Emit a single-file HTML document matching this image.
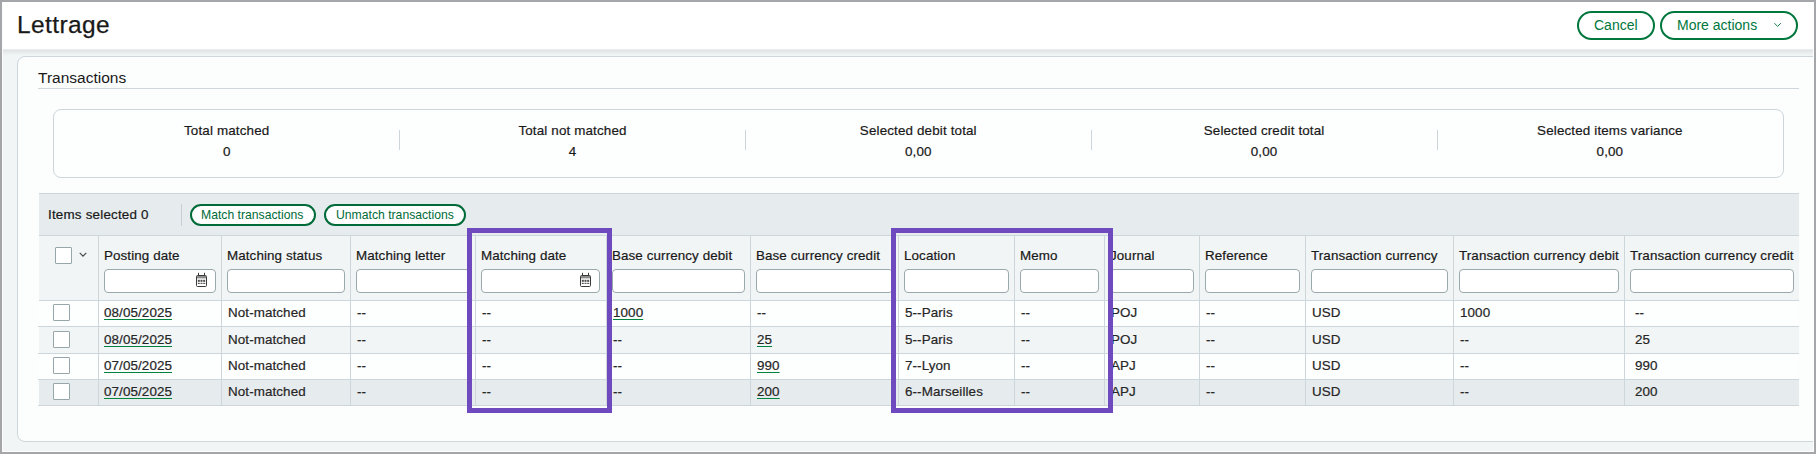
<!DOCTYPE html>
<html><head><meta charset="utf-8"><style>
html,body{margin:0;padding:0;}
body{width:1816px;height:454px;background:#a4a6a9;position:relative;overflow:hidden;font-family:"Liberation Sans", sans-serif;}
.b{position:absolute;}
.t{position:absolute;white-space:nowrap;}
.ls{letter-spacing:0.2px;-webkit-text-stroke:0.2px currentColor;}
</style></head><body>
<div style="position:absolute;left:0;top:0;width:1814px;height:452px;overflow:hidden">
<div class="b" style="left:2px;top:2px;width:1812px;height:450px;background:#f2f5f6;"></div>
<div class="b" style="left:2px;top:2px;width:1812px;height:47px;background:#ffffff;"></div>
<div class="b" style="left:2px;top:49px;width:1812px;height:1px;background:#eaeded;"></div>
<div class="b" style="left:2px;top:50px;width:1812px;height:1px;background:#e2e5e6;"></div>
<div class="b" style="left:2px;top:51px;width:1812px;height:1px;background:#e5e8e9;"></div>
<div class="b" style="left:2px;top:52px;width:1812px;height:1px;background:#e9eced;"></div>
<div class="b" style="left:2px;top:53px;width:1812px;height:1px;background:#edf0f1;"></div>
<div class="b" style="left:2px;top:54px;width:1812px;height:1px;background:#eff2f3;"></div>
<div class="b" style="left:2px;top:55px;width:1812px;height:1px;background:#f1f4f5;"></div>
<div class="t " style="left:17px;top:10.83px;font-size:24.5px;line-height:27.366px;color:#191919;font-weight:normal;letter-spacing:0.4px;-webkit-text-stroke:0.25px #191919;">Lettrage</div>
<div class="b" style="left:1577px;top:11px;width:78px;height:29px;border:2px solid #00773d;border-radius:15px;box-sizing:border-box;background:#fff;"></div>
<div class="t " style="left:1594px;top:18.33px;font-size:14px;line-height:15.638px;color:#00773d;font-weight:normal;">Cancel</div>
<div class="b" style="left:1660px;top:11px;width:138px;height:29px;border:2px solid #00773d;border-radius:15px;box-sizing:border-box;background:#fff;"></div>
<div class="t " style="left:1677px;top:18.33px;font-size:14px;line-height:15.638px;color:#00773d;font-weight:normal;">More actions</div>
<svg class="b" style="left:1774px;top:22px" width="8" height="6" viewBox="0 0 8 6"><path d="M0.4 1.2 L3.6 4.4 L6.8 1.2" fill="none" stroke="#00773d" stroke-width="0.95"/></svg>
<div class="b" style="left:17px;top:56px;width:1830px;height:386px;background:#fcfdfd;border:1px solid #ccd6db;border-radius:8px;box-sizing:border-box;"></div>
<div class="t " style="left:38px;top:68.97px;font-size:15.5px;line-height:17.314px;color:#191919;font-weight:normal;">Transactions</div>
<div class="b" style="left:38px;top:88px;width:1761px;height:1px;background:#ccd6db;"></div>
<div class="b" style="left:53px;top:109px;width:1731px;height:69px;background:#fdfefe;border:1px solid #ccd6db;border-radius:8px;box-sizing:border-box;"></div>
<div class="t" style="letter-spacing:0.15px;-webkit-text-stroke:0.2px currentColor;left:26.69999999999999px;width:400px;text-align:center;top:123.87px;font-size:13.4px;line-height:14.968px;color:#191919;">Total matched</div>
<div class="t" style="letter-spacing:0.15px;-webkit-text-stroke:0.2px currentColor;left:26.69999999999999px;width:400px;text-align:center;top:144.87px;font-size:13.4px;line-height:14.968px;color:#191919;">0</div>
<div class="t" style="letter-spacing:0.15px;-webkit-text-stroke:0.2px currentColor;left:372.5px;width:400px;text-align:center;top:123.87px;font-size:13.4px;line-height:14.968px;color:#191919;">Total not matched</div>
<div class="t" style="letter-spacing:0.15px;-webkit-text-stroke:0.2px currentColor;left:372.5px;width:400px;text-align:center;top:144.87px;font-size:13.4px;line-height:14.968px;color:#191919;">4</div>
<div class="b" style="left:399px;top:130px;width:1px;height:20px;background:#ccd6db;"></div>
<div class="t" style="letter-spacing:0.15px;-webkit-text-stroke:0.2px currentColor;left:718.3px;width:400px;text-align:center;top:123.87px;font-size:13.4px;line-height:14.968px;color:#191919;">Selected debit total</div>
<div class="t" style="letter-spacing:0.15px;-webkit-text-stroke:0.2px currentColor;left:718.3px;width:400px;text-align:center;top:144.87px;font-size:13.4px;line-height:14.968px;color:#191919;">0,00</div>
<div class="b" style="left:745px;top:130px;width:1px;height:20px;background:#ccd6db;"></div>
<div class="t" style="letter-spacing:0.15px;-webkit-text-stroke:0.2px currentColor;left:1064.1000000000001px;width:400px;text-align:center;top:123.87px;font-size:13.4px;line-height:14.968px;color:#191919;">Selected credit total</div>
<div class="t" style="letter-spacing:0.15px;-webkit-text-stroke:0.2px currentColor;left:1064.1000000000001px;width:400px;text-align:center;top:144.87px;font-size:13.4px;line-height:14.968px;color:#191919;">0,00</div>
<div class="b" style="left:1091px;top:130px;width:1px;height:20px;background:#ccd6db;"></div>
<div class="t" style="letter-spacing:0.15px;-webkit-text-stroke:0.2px currentColor;left:1409.9px;width:400px;text-align:center;top:123.87px;font-size:13.4px;line-height:14.968px;color:#191919;">Selected items variance</div>
<div class="t" style="letter-spacing:0.15px;-webkit-text-stroke:0.2px currentColor;left:1409.9px;width:400px;text-align:center;top:144.87px;font-size:13.4px;line-height:14.968px;color:#191919;">0,00</div>
<div class="b" style="left:1437px;top:130px;width:1px;height:20px;background:#ccd6db;"></div>
<div class="b" style="left:39px;top:193px;width:1760px;height:42px;background:#e6ebed;border-top:1px solid #ccd6db;box-sizing:border-box;"></div>
<div class="t  ls" style="left:48px;top:207.87px;font-size:13.4px;line-height:14.968px;color:#191919;font-weight:normal;">Items selected 0</div>
<div class="b" style="left:181px;top:204px;width:1px;height:22px;background:#c5d0d5;"></div>
<div class="b" style="left:190px;top:204px;width:126px;height:22px;border:2px solid #006b38;border-radius:11px;box-sizing:border-box;background:#fff;"></div>
<div class="t " style="left:201px;top:208.96px;font-size:12.2px;line-height:13.627px;color:#006b38;font-weight:normal;">Match transactions</div>
<div class="b" style="left:324px;top:204px;width:142px;height:22px;border:2px solid #006b38;border-radius:11px;box-sizing:border-box;background:#fff;"></div>
<div class="t " style="left:336px;top:208.96px;font-size:12.2px;line-height:13.627px;color:#006b38;font-weight:normal;">Unmatch transactions</div>
<div class="b" style="left:39px;top:235px;width:1760px;height:66px;background:#f2f5f6;border-top:1px solid #ccd6db;border-bottom:1px solid #ccd6db;box-sizing:border-box;"></div>
<div class="b" style="left:39px;top:301px;width:1760px;height:26px;background:#fdfefe;border-bottom:1px solid #ccd6db;box-sizing:border-box;"></div>
<div class="b" style="left:39px;top:327px;width:1760px;height:27px;background:#f2f5f6;border-bottom:1px solid #ccd6db;box-sizing:border-box;"></div>
<div class="b" style="left:39px;top:354px;width:1760px;height:26px;background:#fdfefe;border-bottom:1px solid #ccd6db;box-sizing:border-box;"></div>
<div class="b" style="left:39px;top:380px;width:1760px;height:26px;background:#e6ebed;border-bottom:1px solid #ccd6db;box-sizing:border-box;"></div>
<div class="b" style="left:38px;top:326px;width:1px;height:1px;background:#ccd6db;"></div>
<div class="b" style="left:38px;top:353px;width:1px;height:1px;background:#ccd6db;"></div>
<div class="b" style="left:38px;top:379px;width:1px;height:1px;background:#ccd6db;"></div>
<div class="b" style="left:38px;top:405px;width:1px;height:1px;background:#ccd6db;"></div>
<div class="b" style="left:98px;top:236px;width:1px;height:170px;background:#ccd6db;"></div>
<div class="b" style="left:221px;top:236px;width:1px;height:170px;background:#ccd6db;"></div>
<div class="b" style="left:350px;top:236px;width:1px;height:170px;background:#ccd6db;"></div>
<div class="b" style="left:475px;top:236px;width:1px;height:170px;background:#ccd6db;"></div>
<div class="b" style="left:606px;top:236px;width:1px;height:170px;background:#ccd6db;"></div>
<div class="b" style="left:750px;top:236px;width:1px;height:170px;background:#ccd6db;"></div>
<div class="b" style="left:898px;top:236px;width:1px;height:170px;background:#ccd6db;"></div>
<div class="b" style="left:1014px;top:236px;width:1px;height:170px;background:#ccd6db;"></div>
<div class="b" style="left:1104px;top:236px;width:1px;height:170px;background:#ccd6db;"></div>
<div class="b" style="left:1199px;top:236px;width:1px;height:170px;background:#ccd6db;"></div>
<div class="b" style="left:1305px;top:236px;width:1px;height:170px;background:#ccd6db;"></div>
<div class="b" style="left:1453px;top:236px;width:1px;height:170px;background:#ccd6db;"></div>
<div class="b" style="left:1624px;top:236px;width:1px;height:170px;background:#ccd6db;"></div>
<div class="t  ls" style="left:104px;top:248.87px;font-size:13.4px;line-height:14.968px;color:#191919;font-weight:normal;letter-spacing:0.1px;">Posting date</div>
<div class="b" style="left:104px;top:269px;width:112px;height:24px;background:#fff;border:1px solid #9aa9ac;border-radius:4px;box-sizing:border-box;"></div>
<div class="b" style="left:195px;top:272px;width:13px;height:15px;line-height:0"><svg width="13" height="15" viewBox="0 0 13 15"><rect x="1.5" y="3.5" width="10" height="11" rx="1" fill="#fff" stroke="#3a3a3a" stroke-width="1"/><rect x="2" y="4" width="9" height="2.4" fill="#8c8c8c"/><path d="M3.5 0.8V3.5M9.5 0.8V3.5" stroke="#3a3a3a" stroke-width="1"/><g fill="#4a4a4a"><rect x="2.8" y="7.8" width="2" height="2"/><rect x="5.5" y="7.8" width="2" height="2"/><rect x="8.2" y="7.8" width="2" height="2"/><rect x="2.8" y="10.8" width="2" height="1.1"/><rect x="5.5" y="10.8" width="2" height="1.1"/><rect x="8.2" y="10.8" width="2" height="1.1"/></g></svg></div>
<div class="t  ls" style="left:227px;top:248.87px;font-size:13.4px;line-height:14.968px;color:#191919;font-weight:normal;letter-spacing:0.1px;">Matching status</div>
<div class="b" style="left:227px;top:269px;width:118px;height:24px;background:#fff;border:1px solid #9aa9ac;border-radius:4px;box-sizing:border-box;"></div>
<div class="t  ls" style="left:356px;top:248.87px;font-size:13.4px;line-height:14.968px;color:#191919;font-weight:normal;letter-spacing:0.1px;">Matching letter</div>
<div class="b" style="left:356px;top:269px;width:114px;height:24px;background:#fff;border:1px solid #9aa9ac;border-radius:4px;box-sizing:border-box;"></div>
<div class="t  ls" style="left:481px;top:248.87px;font-size:13.4px;line-height:14.968px;color:#191919;font-weight:normal;letter-spacing:0.1px;">Matching date</div>
<div class="b" style="left:481px;top:269px;width:119px;height:24px;background:#fff;border:1px solid #9aa9ac;border-radius:4px;box-sizing:border-box;"></div>
<div class="b" style="left:579px;top:272px;width:13px;height:15px;line-height:0"><svg width="13" height="15" viewBox="0 0 13 15"><rect x="1.5" y="3.5" width="10" height="11" rx="1" fill="#fff" stroke="#3a3a3a" stroke-width="1"/><rect x="2" y="4" width="9" height="2.4" fill="#8c8c8c"/><path d="M3.5 0.8V3.5M9.5 0.8V3.5" stroke="#3a3a3a" stroke-width="1"/><g fill="#4a4a4a"><rect x="2.8" y="7.8" width="2" height="2"/><rect x="5.5" y="7.8" width="2" height="2"/><rect x="8.2" y="7.8" width="2" height="2"/><rect x="2.8" y="10.8" width="2" height="1.1"/><rect x="5.5" y="10.8" width="2" height="1.1"/><rect x="8.2" y="10.8" width="2" height="1.1"/></g></svg></div>
<div class="t  ls" style="left:612px;top:248.87px;font-size:13.4px;line-height:14.968px;color:#191919;font-weight:normal;letter-spacing:0.1px;">Base currency debit</div>
<div class="b" style="left:612px;top:269px;width:133px;height:24px;background:#fff;border:1px solid #9aa9ac;border-radius:4px;box-sizing:border-box;"></div>
<div class="t  ls" style="left:756px;top:248.87px;font-size:13.4px;line-height:14.968px;color:#191919;font-weight:normal;letter-spacing:0.1px;">Base currency credit</div>
<div class="b" style="left:756px;top:269px;width:137px;height:24px;background:#fff;border:1px solid #9aa9ac;border-radius:4px;box-sizing:border-box;"></div>
<div class="t  ls" style="left:904px;top:248.87px;font-size:13.4px;line-height:14.968px;color:#191919;font-weight:normal;letter-spacing:0.1px;">Location</div>
<div class="b" style="left:904px;top:269px;width:105px;height:24px;background:#fff;border:1px solid #9aa9ac;border-radius:4px;box-sizing:border-box;"></div>
<div class="t  ls" style="left:1020px;top:248.87px;font-size:13.4px;line-height:14.968px;color:#191919;font-weight:normal;letter-spacing:0.1px;">Memo</div>
<div class="b" style="left:1020px;top:269px;width:79px;height:24px;background:#fff;border:1px solid #9aa9ac;border-radius:4px;box-sizing:border-box;"></div>
<div class="t  ls" style="left:1110px;top:248.87px;font-size:13.4px;line-height:14.968px;color:#191919;font-weight:normal;letter-spacing:0.1px;">Journal</div>
<div class="b" style="left:1110px;top:269px;width:84px;height:24px;background:#fff;border:1px solid #9aa9ac;border-radius:4px;box-sizing:border-box;"></div>
<div class="t  ls" style="left:1205px;top:248.87px;font-size:13.4px;line-height:14.968px;color:#191919;font-weight:normal;letter-spacing:0.1px;">Reference</div>
<div class="b" style="left:1205px;top:269px;width:95px;height:24px;background:#fff;border:1px solid #9aa9ac;border-radius:4px;box-sizing:border-box;"></div>
<div class="t  ls" style="left:1311px;top:248.87px;font-size:13.4px;line-height:14.968px;color:#191919;font-weight:normal;letter-spacing:0.1px;">Transaction currency</div>
<div class="b" style="left:1311px;top:269px;width:137px;height:24px;background:#fff;border:1px solid #9aa9ac;border-radius:4px;box-sizing:border-box;"></div>
<div class="t  ls" style="left:1459px;top:248.87px;font-size:13.4px;line-height:14.968px;color:#191919;font-weight:normal;letter-spacing:0.1px;">Transaction currency debit</div>
<div class="b" style="left:1459px;top:269px;width:160px;height:24px;background:#fff;border:1px solid #9aa9ac;border-radius:4px;box-sizing:border-box;"></div>
<div class="t  ls" style="left:1630px;top:248.87px;font-size:13.4px;line-height:14.968px;color:#191919;font-weight:normal;letter-spacing:0.1px;">Transaction currency credit</div>
<div class="b" style="left:1630px;top:269px;width:164px;height:24px;background:#fff;border:1px solid #9aa9ac;border-radius:4px;box-sizing:border-box;"></div>
<div class="b" style="left:55px;top:247px;width:17px;height:17px;background:#fff;border:1px solid #96a6ab;border-radius:1px;box-sizing:border-box;"></div>
<svg class="b" style="left:79px;top:252px" width="8" height="6" viewBox="0 0 8 6"><path d="M0.7 0.8 L4 4.2 L7.3 0.8" fill="none" stroke="#444" stroke-width="1.1"/></svg>
<div class="b" style="left:53px;top:304px;width:17px;height:17px;background:#fff;border:1px solid #96a6ab;border-radius:1px;box-sizing:border-box;"></div>
<div class="t  ls" style="left:104px;top:305.87px;font-size:13.4px;line-height:14.968px;color:#262626;font-weight:normal;letter-spacing:0.1px;text-decoration:underline;text-decoration-color:#00823f;text-underline-offset:2px;">08/05/2025</div>
<div class="t  ls" style="left:228px;top:305.87px;font-size:13.4px;line-height:14.968px;color:#262626;font-weight:normal;letter-spacing:0.1px;">Not-matched</div>
<div class="t  ls" style="left:357px;top:305.87px;font-size:13.4px;line-height:14.968px;color:#262626;font-weight:normal;letter-spacing:0.1px;">--</div>
<div class="t  ls" style="left:482px;top:305.87px;font-size:13.4px;line-height:14.968px;color:#262626;font-weight:normal;letter-spacing:0.1px;">--</div>
<div class="t  ls" style="left:613px;top:305.87px;font-size:13.4px;line-height:14.968px;color:#262626;font-weight:normal;letter-spacing:0.1px;text-decoration:underline;text-decoration-color:#00823f;text-underline-offset:2px;">1000</div>
<div class="t  ls" style="left:757px;top:305.87px;font-size:13.4px;line-height:14.968px;color:#262626;font-weight:normal;letter-spacing:0.1px;">--</div>
<div class="t  ls" style="left:905px;top:305.87px;font-size:13.4px;line-height:14.968px;color:#262626;font-weight:normal;letter-spacing:0.1px;">5--Paris</div>
<div class="t  ls" style="left:1021px;top:305.87px;font-size:13.4px;line-height:14.968px;color:#262626;font-weight:normal;letter-spacing:0.1px;">--</div>
<div class="t  ls" style="left:1111px;top:305.87px;font-size:13.4px;line-height:14.968px;color:#262626;font-weight:normal;letter-spacing:0.1px;">POJ</div>
<div class="t  ls" style="left:1206px;top:305.87px;font-size:13.4px;line-height:14.968px;color:#262626;font-weight:normal;letter-spacing:0.1px;">--</div>
<div class="t  ls" style="left:1312px;top:305.87px;font-size:13.4px;line-height:14.968px;color:#262626;font-weight:normal;letter-spacing:0.1px;">USD</div>
<div class="t  ls" style="left:1460px;top:305.87px;font-size:13.4px;line-height:14.968px;color:#262626;font-weight:normal;letter-spacing:0.1px;">1000</div>
<div class="t  ls" style="left:1635px;top:305.87px;font-size:13.4px;line-height:14.968px;color:#262626;font-weight:normal;letter-spacing:0.1px;">--</div>
<div class="b" style="left:53px;top:331px;width:17px;height:17px;background:#fff;border:1px solid #96a6ab;border-radius:1px;box-sizing:border-box;"></div>
<div class="t  ls" style="left:104px;top:332.87px;font-size:13.4px;line-height:14.968px;color:#262626;font-weight:normal;letter-spacing:0.1px;text-decoration:underline;text-decoration-color:#00823f;text-underline-offset:2px;">08/05/2025</div>
<div class="t  ls" style="left:228px;top:332.87px;font-size:13.4px;line-height:14.968px;color:#262626;font-weight:normal;letter-spacing:0.1px;">Not-matched</div>
<div class="t  ls" style="left:357px;top:332.87px;font-size:13.4px;line-height:14.968px;color:#262626;font-weight:normal;letter-spacing:0.1px;">--</div>
<div class="t  ls" style="left:482px;top:332.87px;font-size:13.4px;line-height:14.968px;color:#262626;font-weight:normal;letter-spacing:0.1px;">--</div>
<div class="t  ls" style="left:613px;top:332.87px;font-size:13.4px;line-height:14.968px;color:#262626;font-weight:normal;letter-spacing:0.1px;">--</div>
<div class="t  ls" style="left:757px;top:332.87px;font-size:13.4px;line-height:14.968px;color:#262626;font-weight:normal;letter-spacing:0.1px;text-decoration:underline;text-decoration-color:#00823f;text-underline-offset:2px;">25</div>
<div class="t  ls" style="left:905px;top:332.87px;font-size:13.4px;line-height:14.968px;color:#262626;font-weight:normal;letter-spacing:0.1px;">5--Paris</div>
<div class="t  ls" style="left:1021px;top:332.87px;font-size:13.4px;line-height:14.968px;color:#262626;font-weight:normal;letter-spacing:0.1px;">--</div>
<div class="t  ls" style="left:1111px;top:332.87px;font-size:13.4px;line-height:14.968px;color:#262626;font-weight:normal;letter-spacing:0.1px;">POJ</div>
<div class="t  ls" style="left:1206px;top:332.87px;font-size:13.4px;line-height:14.968px;color:#262626;font-weight:normal;letter-spacing:0.1px;">--</div>
<div class="t  ls" style="left:1312px;top:332.87px;font-size:13.4px;line-height:14.968px;color:#262626;font-weight:normal;letter-spacing:0.1px;">USD</div>
<div class="t  ls" style="left:1460px;top:332.87px;font-size:13.4px;line-height:14.968px;color:#262626;font-weight:normal;letter-spacing:0.1px;">--</div>
<div class="t  ls" style="left:1635px;top:332.87px;font-size:13.4px;line-height:14.968px;color:#262626;font-weight:normal;letter-spacing:0.1px;">25</div>
<div class="b" style="left:53px;top:357px;width:17px;height:17px;background:#fff;border:1px solid #96a6ab;border-radius:1px;box-sizing:border-box;"></div>
<div class="t  ls" style="left:104px;top:358.87px;font-size:13.4px;line-height:14.968px;color:#262626;font-weight:normal;letter-spacing:0.1px;text-decoration:underline;text-decoration-color:#00823f;text-underline-offset:2px;">07/05/2025</div>
<div class="t  ls" style="left:228px;top:358.87px;font-size:13.4px;line-height:14.968px;color:#262626;font-weight:normal;letter-spacing:0.1px;">Not-matched</div>
<div class="t  ls" style="left:357px;top:358.87px;font-size:13.4px;line-height:14.968px;color:#262626;font-weight:normal;letter-spacing:0.1px;">--</div>
<div class="t  ls" style="left:482px;top:358.87px;font-size:13.4px;line-height:14.968px;color:#262626;font-weight:normal;letter-spacing:0.1px;">--</div>
<div class="t  ls" style="left:613px;top:358.87px;font-size:13.4px;line-height:14.968px;color:#262626;font-weight:normal;letter-spacing:0.1px;">--</div>
<div class="t  ls" style="left:757px;top:358.87px;font-size:13.4px;line-height:14.968px;color:#262626;font-weight:normal;letter-spacing:0.1px;text-decoration:underline;text-decoration-color:#00823f;text-underline-offset:2px;">990</div>
<div class="t  ls" style="left:905px;top:358.87px;font-size:13.4px;line-height:14.968px;color:#262626;font-weight:normal;letter-spacing:0.1px;">7--Lyon</div>
<div class="t  ls" style="left:1021px;top:358.87px;font-size:13.4px;line-height:14.968px;color:#262626;font-weight:normal;letter-spacing:0.1px;">--</div>
<div class="t  ls" style="left:1111px;top:358.87px;font-size:13.4px;line-height:14.968px;color:#262626;font-weight:normal;letter-spacing:0.1px;">APJ</div>
<div class="t  ls" style="left:1206px;top:358.87px;font-size:13.4px;line-height:14.968px;color:#262626;font-weight:normal;letter-spacing:0.1px;">--</div>
<div class="t  ls" style="left:1312px;top:358.87px;font-size:13.4px;line-height:14.968px;color:#262626;font-weight:normal;letter-spacing:0.1px;">USD</div>
<div class="t  ls" style="left:1460px;top:358.87px;font-size:13.4px;line-height:14.968px;color:#262626;font-weight:normal;letter-spacing:0.1px;">--</div>
<div class="t  ls" style="left:1635px;top:358.87px;font-size:13.4px;line-height:14.968px;color:#262626;font-weight:normal;letter-spacing:0.1px;">990</div>
<div class="b" style="left:53px;top:383px;width:17px;height:17px;background:#fff;border:1px solid #96a6ab;border-radius:1px;box-sizing:border-box;"></div>
<div class="t  ls" style="left:104px;top:384.87px;font-size:13.4px;line-height:14.968px;color:#262626;font-weight:normal;letter-spacing:0.1px;text-decoration:underline;text-decoration-color:#00823f;text-underline-offset:2px;">07/05/2025</div>
<div class="t  ls" style="left:228px;top:384.87px;font-size:13.4px;line-height:14.968px;color:#262626;font-weight:normal;letter-spacing:0.1px;">Not-matched</div>
<div class="t  ls" style="left:357px;top:384.87px;font-size:13.4px;line-height:14.968px;color:#262626;font-weight:normal;letter-spacing:0.1px;">--</div>
<div class="t  ls" style="left:482px;top:384.87px;font-size:13.4px;line-height:14.968px;color:#262626;font-weight:normal;letter-spacing:0.1px;">--</div>
<div class="t  ls" style="left:613px;top:384.87px;font-size:13.4px;line-height:14.968px;color:#262626;font-weight:normal;letter-spacing:0.1px;">--</div>
<div class="t  ls" style="left:757px;top:384.87px;font-size:13.4px;line-height:14.968px;color:#262626;font-weight:normal;letter-spacing:0.1px;text-decoration:underline;text-decoration-color:#00823f;text-underline-offset:2px;">200</div>
<div class="t  ls" style="left:905px;top:384.87px;font-size:13.4px;line-height:14.968px;color:#262626;font-weight:normal;letter-spacing:0.1px;">6--Marseilles</div>
<div class="t  ls" style="left:1021px;top:384.87px;font-size:13.4px;line-height:14.968px;color:#262626;font-weight:normal;letter-spacing:0.1px;">--</div>
<div class="t  ls" style="left:1111px;top:384.87px;font-size:13.4px;line-height:14.968px;color:#262626;font-weight:normal;letter-spacing:0.1px;">APJ</div>
<div class="t  ls" style="left:1206px;top:384.87px;font-size:13.4px;line-height:14.968px;color:#262626;font-weight:normal;letter-spacing:0.1px;">--</div>
<div class="t  ls" style="left:1312px;top:384.87px;font-size:13.4px;line-height:14.968px;color:#262626;font-weight:normal;letter-spacing:0.1px;">USD</div>
<div class="t  ls" style="left:1460px;top:384.87px;font-size:13.4px;line-height:14.968px;color:#262626;font-weight:normal;letter-spacing:0.1px;">--</div>
<div class="t  ls" style="left:1635px;top:384.87px;font-size:13.4px;line-height:14.968px;color:#262626;font-weight:normal;letter-spacing:0.1px;">200</div>
<div class="b" style="left:467px;top:228px;width:145px;height:185px;border:5px solid #6f4abf;box-sizing:border-box;"></div>
<div class="b" style="left:891px;top:228px;width:222px;height:185px;border:5px solid #6f4abf;box-sizing:border-box;"></div>
<div class="b" style="left:2px;top:2px;width:1px;height:450px;background:#fbfcfc;"></div>
<div class="b" style="left:1813px;top:2px;width:1px;height:450px;background:#ffffff;"></div>
<div class="b" style="left:2px;top:451px;width:1812px;height:1px;background:#ffffff;"></div>
</div>
</body></html>
